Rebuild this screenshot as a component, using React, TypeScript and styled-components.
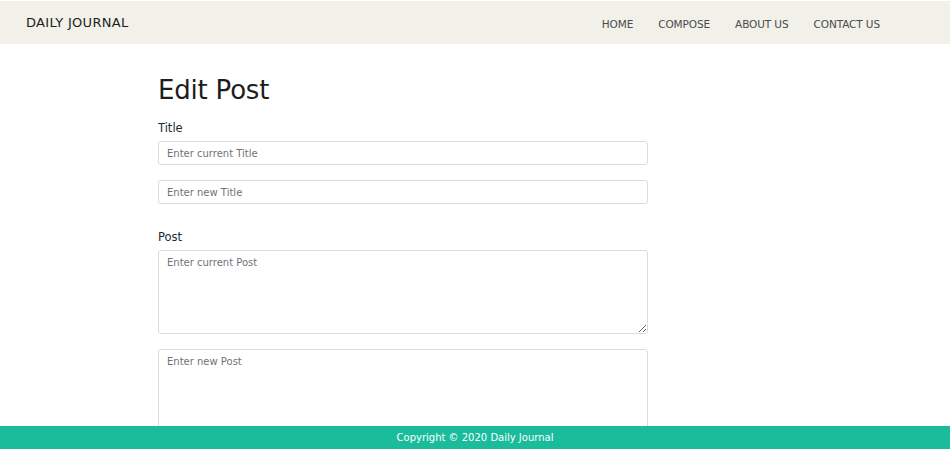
import styled, { createGlobalStyle } from 'styled-components';

const GlobalStyle = createGlobalStyle`
  * {
    box-sizing: border-box;
  }

  body {
    margin: 0;
    background: #ffffff;
    font-family: "DejaVu Sans", "Liberation Sans", sans-serif;
    color: #212529;
  }
`;

const NavBar = styled.nav`
  margin-top: 1px;
  height: 43px;
  padding: 0 70px 0 26px;
  display: flex;
  align-items: center;
  justify-content: space-between;
  background: #f1f0e9;
`;

const Brand = styled.a`
  font-size: 13px;
  letter-spacing: 0.3px;
  color: #1d1d1d;
  text-decoration: none;
`;

const NavLinks = styled.ul`
  display: flex;
  align-items: center;
  gap: 25px;
  margin: 0;
  padding: 0;
  list-style: none;
`;

const NavLink = styled.a`
  font-size: 10.5px;
  letter-spacing: -0.1px;
  color: #4a4a4a;
  text-decoration: none;
`;

const Container = styled.main`
  width: 634px;
  margin: 0 auto;
  padding: 31px 0 80px;
`;

const Heading = styled.h1`
  margin: 0 0 16px;
  font-size: 26px;
  font-weight: 400;
  letter-spacing: -0.2px;
  color: #1d1d1d;
`;

const Form = styled.form`
  width: 490px;
`;

const Group = styled.div`
  display: flex;
  flex-direction: column;
  gap: 15px;
  margin-bottom: 26px;
`;

const Label = styled.label`
  font-size: 11.5px;
  color: #1d2a33;
  margin-bottom: -9px;
`;

const Field = styled.input`
  height: 24px;
  padding: 0 8px;
  font-family: inherit;
  font-size: 10px;
  color: #495057;
  border: 1px solid #dcdcdc;
  border-radius: 3px;
  background: #ffffff;

  &::placeholder {
    color: #6f7378;
  }
`;

const Area = styled.textarea<{ $rows: number }>`
  height: ${({ $rows }) => $rows}px;
  padding: 6px 8px;
  font-family: inherit;
  font-size: 10px;
  color: #495057;
  border: 1px solid #dcdcdc;
  border-radius: 3px;
  background: #ffffff;

  &::placeholder {
    color: #6f7378;
  }
`;

const Footer = styled.footer`
  position: fixed;
  left: 0;
  right: 0;
  bottom: 0;
  height: 23px;
  display: flex;
  align-items: center;
  justify-content: center;
  background: #1abc9c;
  color: #ffffff;
  font-size: 10px;
`;

export default function App() {
  return (
    <>
      <GlobalStyle />
      <NavBar>
        <Brand href="#">DAILY JOURNAL</Brand>
        <NavLinks>
          {['HOME', 'COMPOSE', 'ABOUT US', 'CONTACT US'].map((item) => (
            <li key={item}>
              <NavLink href="#">{item}</NavLink>
            </li>
          ))}
        </NavLinks>
      </NavBar>

      <Container>
        <Heading>Edit Post</Heading>
        <Form>
          <Group>
            <Label>Title</Label>
            <Field placeholder="Enter current Title" />
            <Field placeholder="Enter new Title" />
          </Group>
          <Group>
            <Label>Post</Label>
            <Area $rows={84} placeholder="Enter current Post" />
            <Area $rows={110} placeholder="Enter new Post" />
          </Group>
        </Form>
      </Container>

      <Footer>Copyright © 2020 Daily Journal</Footer>
    </>
  );
}
